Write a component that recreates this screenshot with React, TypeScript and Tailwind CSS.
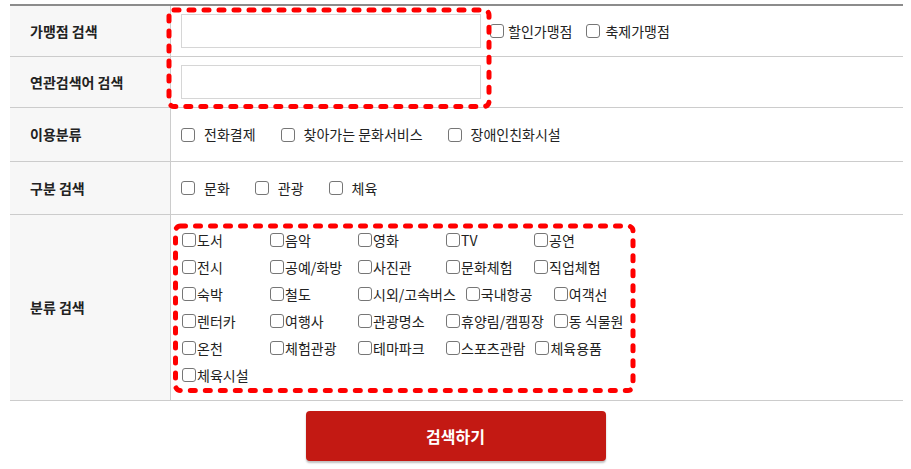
import React from "react";

const font = { fontFamily: '"Noto Sans CJK KR", "Noto Sans", sans-serif' };

const categories = [
  "도서", "음악", "영화", "TV", "공연",
  "전시", "공예/화방", "사진관", "문화체험", "직업체험",
  "숙박", "철도", "시외/고속버스", "국내항공", "여객선",
  "렌터카", "여행사", "관광명소", "휴양림/캠핑장", "동 식물원",
  "온천", "체험관광", "테마파크", "스포츠관람", "체육용품",
  "체육시설",
];

function Box() {
  return (
    <input
      type="checkbox"
      className="appearance-none w-[14px] h-[14px] shrink-0 border border-[#767676] rounded-[3px] bg-white m-0"
    />
  );
}

function Label({ children }: { children: React.ReactNode }) {
  return (
    <div className="w-[161px] shrink-0 bg-[#f7f7f7] border-r border-[#cccccc] flex items-center pl-[20px] text-[14px] font-bold text-[#222]">
      {children}
    </div>
  );
}

function Row({ h, children }: { h: string; children: React.ReactNode }) {
  return <div className={`flex border-b border-[#cccccc] ${h}`}>{children}</div>;
}

export default function App() {
  return (
    <div className="relative w-[911px] h-[469px] bg-white text-[#222]" style={font}>
      <div className="ml-[10px] w-[893px] pt-[4px]">
        <div className="border-t-2 border-[#8c8c8c]">
          <Row h="h-[51px]">
            <Label>가맹점 검색</Label>
            <div className="flex items-center pl-[10px] text-[14px]">
              <input type="text" className="w-[300px] h-[34px] border border-[#d6d6d6] bg-white outline-none" />
              <label className="flex items-center ml-[9px]">
                <Box />
                <span className="ml-[4px]">할인가맹점</span>
              </label>
              <label className="flex items-center ml-[14px]">
                <Box />
                <span className="ml-[5px]">축제가맹점</span>
              </label>
            </div>
          </Row>
          <Row h="h-[51px]">
            <Label>연관검색어 검색</Label>
            <div className="flex items-center pl-[10px]">
              <input type="text" className="w-[300px] h-[34px] border border-[#d6d6d6] bg-white outline-none" />
            </div>
          </Row>
          <Row h="h-[54px]">
            <Label>이용분류</Label>
            <div className="flex items-center pl-[10px] gap-[25px] text-[14px]">
              {["전화결제", "찾아가는 문화서비스", "장애인친화시설"].map((t) => (
                <label key={t} className="flex items-center gap-[9px]">
                  <Box />
                  <span>{t}</span>
                </label>
              ))}
            </div>
          </Row>
          <Row h="h-[53px]">
            <Label>구분 검색</Label>
            <div className="flex items-center pl-[10px] gap-[25px] text-[14px]">
              {["문화", "관광", "체육"].map((t) => (
                <label key={t} className="flex items-center gap-[9px]">
                  <Box />
                  <span>{t}</span>
                </label>
              ))}
            </div>
          </Row>
          <Row h="h-[186px]">
            <Label>분류 검색</Label>
            <div className="flex items-center pl-[11px]">
              <div className="w-[462px] flex flex-wrap text-[14px]">
                {categories.map((t) => (
                  <label key={t} className="h-[27px] min-w-[88px] pr-[10px] flex items-center">
                    <Box />
                    <span className="ml-[1px]">{t}</span>
                  </label>
                ))}
              </div>
            </div>
          </Row>
        </div>
      </div>
      <div className="flex justify-center mt-[10px]">
        <button className="w-[300px] h-[50px] rounded-[4px] bg-[#c31913] text-white text-[16px] font-bold shadow-[0_2px_2px_rgba(0,0,0,0.25)]">
          검색하기
        </button>
      </div>

      <svg className="absolute left-0 top-0 pointer-events-none" width="911" height="469">
        <rect x="169" y="10" width="320" height="96.5" rx="5" fill="none" stroke="#ff0000" strokeWidth="5" strokeDasharray="5 10" strokeLinecap="round" />
        <rect x="175.5" y="226" width="457.5" height="164.5" rx="5" fill="none" stroke="#ff0000" strokeWidth="5" strokeDasharray="5 10" strokeLinecap="round" />
      </svg>
    </div>
  );
}
